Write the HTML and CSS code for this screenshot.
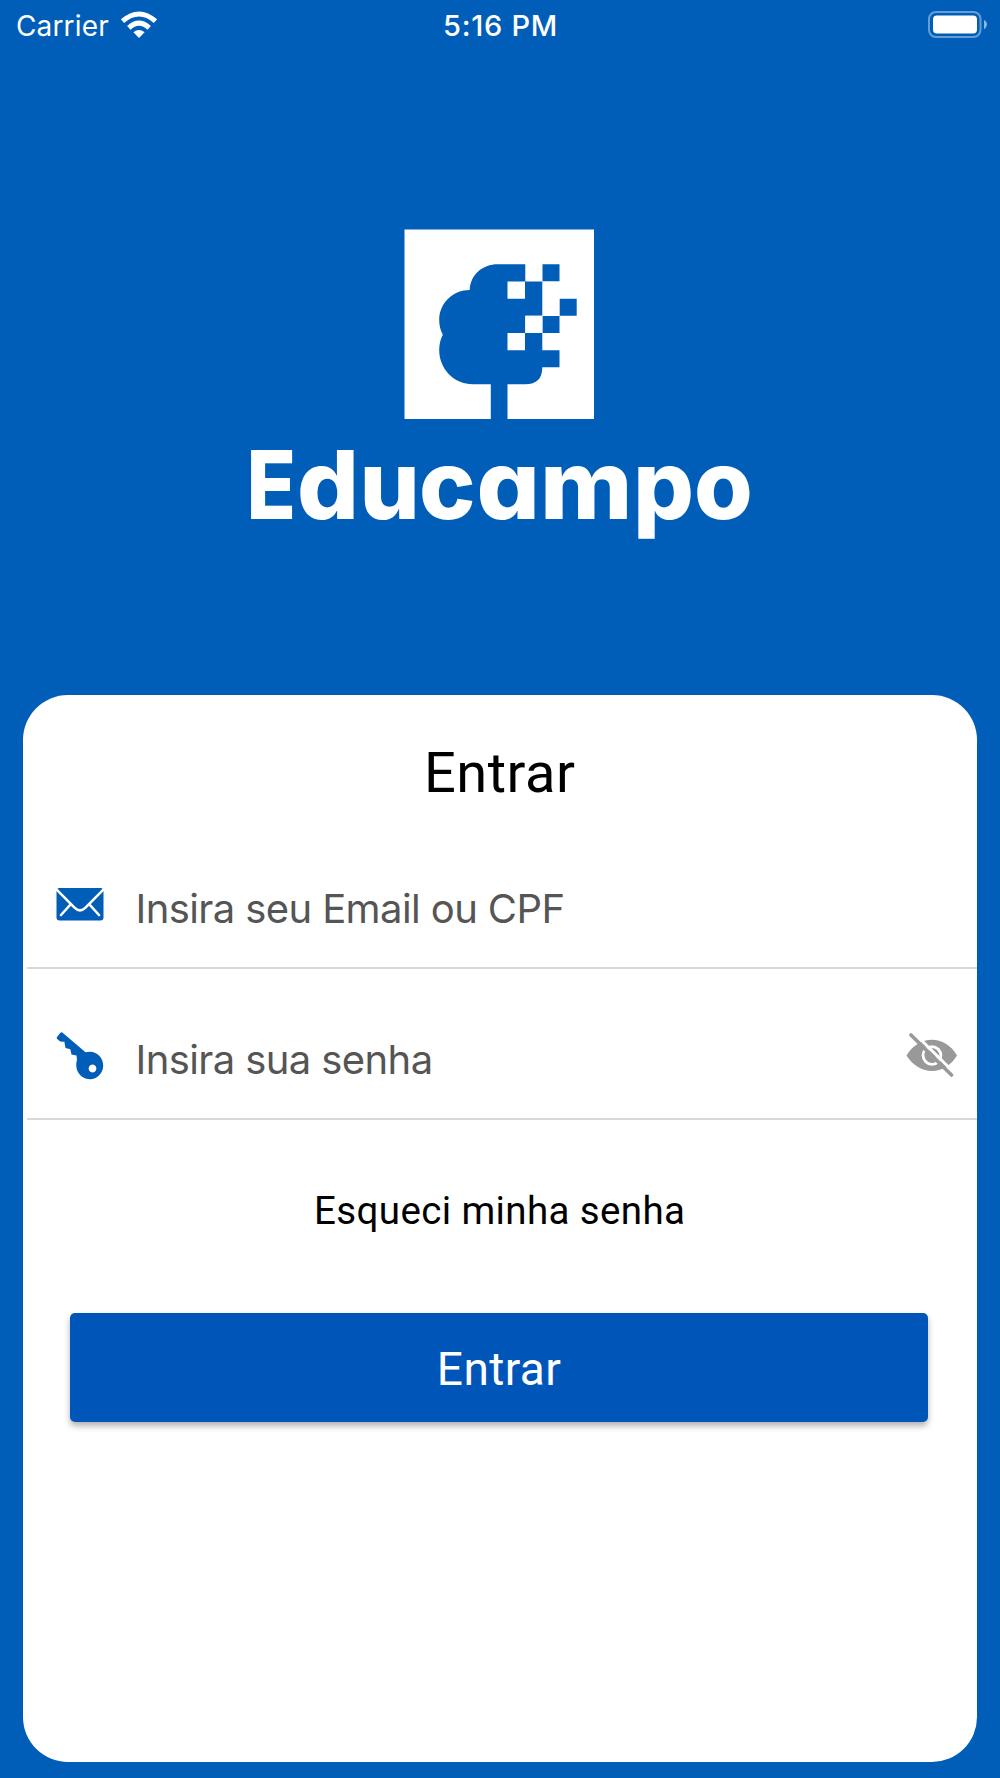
FILE: index.html
```html
<!DOCTYPE html>
<html lang="pt-BR">
<head>
<meta charset="utf-8">
<title>Educampo</title>
<link rel="stylesheet" href="styles.css">
</head>
<body>
<div class="screen">
  <header class="status">
    <div class="status-left">
      <span class="carrier">Carrier</span>
      <svg class="wifi" width="38" height="28" viewBox="0 0 38 28" fill="none" stroke="#fff" stroke-width="5">
        <path d="M2.500 10.200Q19 -4.200 35.500 10.200"/>
        <path d="M8.800 16.800Q19 7.600 29.200 16.800"/>
        <path d="M19 27L13.400 21.200Q19 16.800 24.600 21.200Z" fill="#fff" stroke="none"/>
      </svg>
    </div>
    <span class="time">5:16 PM</span>
    <svg class="battery" width="60" height="28" viewBox="0 0 60 28">
      <rect x="1" y="1" width="51.500" height="25" rx="7" fill="none" stroke="#659ed4" stroke-width="2"/>
      <rect x="5" y="4.500" width="44" height="18" rx="4" fill="#fff"/>
      <path d="M56 9Q59 10.500 59 13.500T56 18.500Z" fill="#8bb6df"/>
    </svg>
  </header>
  <div class="brand">
    <svg width="510" height="320" viewBox="245 225 510 320" role="img" aria-label="Educampo">
      <path fill="#fff" d="M404.500 229.500H594V419H404.500Z"/>
      <g fill="#005eb8">
        <path d="M525.300 264.300V281.500H542.300V315.700H525.300V333H542.300V350.300H559.500V367.300H542.300Q542.300 384.300 525.300 384.300H507.500V420H490.800V384.300H473C454 384.300 439.200 369 439.200 350Q439.200 341.500 442.800 334.700Q439.200 328 439.200 320C439.200 303 453 290 469.700 290C470.500 275 482 264.300 498 264.300Z"/>
        <path d="M542.500 264.300h17v17h-17zM559.700 298.700h17v17h-17zM542.500 315.900h17v17h-17z"/>
      </g>
      <path fill="#fff" d="M507.500 281.500h17.500v17.200h-17.500zM525.300 315.700h17v17.300h-17zM507.500 333h17.500v17.300h-17.500z"/>
      <text class="wordmark" y="518.500"><tspan x="246.500" textLength="49.500" lengthAdjust="spacingAndGlyphs">E</tspan><tspan x="297" textLength="62" lengthAdjust="spacingAndGlyphs">d</tspan><tspan x="359.500">u</tspan><tspan x="419">c</tspan><tspan x="476.500" textLength="63.500" lengthAdjust="spacingAndGlyphs">a</tspan><tspan x="540" textLength="92.500" lengthAdjust="spacingAndGlyphs">m</tspan><tspan x="633" textLength="61" lengthAdjust="spacingAndGlyphs">p</tspan><tspan x="694">o</tspan></text>
    </svg>
  </div>
  <main class="card">
    <h1 class="title">Entrar</h1>
    <div class="field">
      <svg class="icon" width="48" height="48" viewBox="0 0 48 48">
        <rect x="0.500" y="8" width="47" height="32.500" rx="3" fill="#005eb8"/>
        <path d="M-1 8L18.500 27.600Q24 33 29.500 27.600L49 8M14.500 24.500L5 35M33.500 24.500L43 35" fill="none" stroke="#fff" stroke-width="2.600" stroke-linecap="round"/>
      </svg>
      <span class="placeholder">Insira seu Email ou CPF</span>
    </div>
    <div class="field secret">
      <svg class="icon" width="48" height="48" viewBox="0 0 48 48">
        <path fill="#005eb8" fill-rule="evenodd" d="M6 .3L29.500 20.200C40 17.500 47.200 25 47.200 33.500C47.200 41.500 41 47.200 34 47.200C24.500 47.200 18 38 21 28L20.500 23.500L15.500 22.500L14.300 17.300L9.500 16L8.300 9.500Q5 10.300 3.500 9L1 6.700Q.3 5.800 1 4.900L4.200 1Q5 .1 6 .3ZM36.500 32.600a3.900 3.900 0 1 0 .01 0Z"/>
      </svg>
      <span class="placeholder">Insira sua senha</span>
      <svg class="eye" width="54" height="46" viewBox="0 0 54 46">
        <path d="M1.500 22.500C14 1.500 40 1.500 52 22.500C40 43 14 43 1.500 22.500Z" fill="#999"/>
        <circle cx="27" cy="22.500" r="10.300" fill="#fff"/>
        <path d="M20 19A8 8 0 0 0 27 30Q29 30 31 29L21 18ZM25.500 15A8 8 0 0 1 34.500 23Q31 26 27 21Q23 17 25.500 15Z" fill="#999"/>
        <path d="M9.500 .500L50.500 41" stroke="#fff" stroke-width="3"/>
        <path d="M6 2L46.500 42" stroke="#999" stroke-width="3.600" stroke-linecap="round"/>
        <circle cx="26" cy="16.300" r="1.200" fill="#fff"/><circle cx="33" cy="23.300" r="1.200" fill="#fff"/>
      </svg>
    </div>
    <a class="forgot">Esqueci minha senha</a>
    <button class="submit" type="button"><span>Entrar</span></button>
  </main>
</div>
</body>
</html>
```
FILE: styles.css
```css
* { box-sizing: border-box; }
body { margin: 0; background: #005eb8; }
.screen {
  width: 1000px;
  height: 1778px;
  overflow: hidden;
  display: flex;
  flex-direction: column;
  background: #005eb8;
  font-family: Inter, "Liberation Sans", sans-serif;
}
.status {
  height: 52px;
  padding: 0 12px 2px 16px;
  display: grid;
  grid-template-columns: 1fr auto 1fr;
  align-items: center;
  color: #fff;
  font-size: 28px;
  line-height: 34px;
}
.status-left { display: flex; align-items: center; gap: 11px; }
.carrier { letter-spacing: .15px; padding-top: 1px; }
.time { font-size: 29px; font-weight: 500; letter-spacing: .75px; margin-right: 3px; padding-top: 1px; }
.battery { justify-self: end; }
.brand {
  height: 643px;
  padding-top: 173px;
  display: flex;
  justify-content: center;
  align-items: flex-start;
}
.wordmark {
  font-family: Inter, "Liberation Sans", sans-serif;
  font-size: 95px;
  font-weight: 800;
  font-feature-settings: "cv11";
  fill: #fff;
}
.card {
  width: 954.500px;
  height: 1067px;
  margin-left: 22.500px;
  display: flex;
  flex-direction: column;
  border-radius: 45px;
  background: #fff;
}
.title {
  margin: 43px 0 0;
  height: 78px;
  text-align: center;
  font: 400 56px/70px Roboto, sans-serif;
  letter-spacing: .55px;
  color: #000;
}
.field {
  height: 153px;
  margin-left: 4.500px;
  padding: 34px 18px 0 29px;
  display: flex;
  align-items: center;
  border-bottom: 2px solid #d8d8dc;
}
.secret { height: 151px; padding-top: 33px; }
.icon { margin-right: 31.500px; transform: translateY(-5px); }
.secret .icon, .secret .eye { transform: translateY(-4px); }
.placeholder { font-size: 40px; line-height: 50px; letter-spacing: -.6px; color: #555; white-space: nowrap; }
.eye { margin-left: auto; }
.forgot {
  margin-top: 66px;
  height: 50px;
  text-align: center;
  font: 400 38.500px/50px Roboto, sans-serif;
  letter-spacing: .38px;
  color: #000;
}
.submit {
  width: 858px;
  height: 109px;
  margin: 77px 0 0 47.500px;
  padding: 2px 0 0;
  border: 0;
  border-radius: 5px;
  background: #0055b8;
  box-shadow: 0 4px 6px rgba(0, 0, 0, .3);
  color: #fff;
  font: 400 46px/56px Roboto, sans-serif;
  letter-spacing: .4px;
}
```
